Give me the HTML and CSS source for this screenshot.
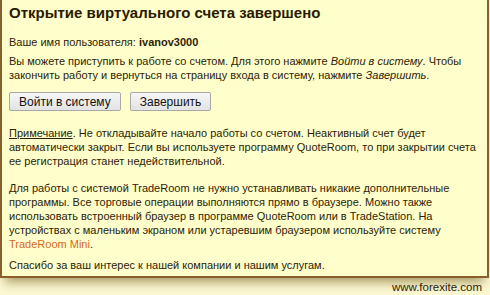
FILE: index.html
```html
<!DOCTYPE html>
<html lang="ru">
<head>
<meta charset="utf-8">
<link rel="stylesheet" href="styles.css">
</head>
<body>
<div class="page">
  <div class="panel">
    <h1 class="title">Открытие виртуального счета завершено</h1>
    <p class="user">Ваше имя пользователя: <b>ivanov3000</b></p>
    <p class="para">Вы можете приступить к работе со счетом. Для этого нажмите <i>Войти в систему</i>. Чтобы закончить работу и вернуться на страницу входа в систему, нажмите <i>Завершить</i>.</p>
    <div class="buttons">
      <button class="btn btn-login">Войти в систему</button>
      <button class="btn btn-finish">Завершить</button>
    </div>
    <p class="para note"><span class="u">Примечание</span>. Не откладывайте начало работы со счетом. Неактивный счет будет автоматически закрыт. Если вы используете программу QuoteRoom, то при закрытии счета ее регистрация станет недействительной.</p>
    <p class="para trade">Для работы с системой TradeRoom не нужно устанавливать никакие дополнительные программы. Все торговые операции выполняются прямо в браузере. Можно также использовать встроенный браузер в программе QuoteRoom или в TradeStation. На устройствах с маленьким экраном или устаревшим браузером используйте систему <a class="link" href="#">TradeRoom Mini</a>.</p>
    <p class="para thanks">Спасибо за ваш интерес к нашей компании и нашим услугам.</p>
  </div>
  <div class="footer">www.forexite.com</div>
</div>
</body>
</html>
```
FILE: styles.css
```css
html, body {
  margin: 0;
  padding: 0;
}
body {
  width: 490px;
  height: 295px;
  overflow: hidden;
  background: #fcf8d2;
  font-family: "Liberation Sans", Arial, sans-serif;
  color: #2e2206;
}
.page {
  display: flex;
  flex-direction: column;
  width: 490px;
}
.panel {
  width: 489px;
  box-sizing: border-box;
  height: 278px;
  background: #ffffcc;
  border: 2px solid #8a5f2d;
  border-top: none;
  padding: 4px 8px 0 7px;
  box-shadow: 0 9px 10px -5px rgba(110, 90, 20, 0.6);
}
.title {
  margin: 0;
  font-size: 15px;
  line-height: 18px;
  font-weight: bold;
  color: #2a1a00;
}
.user {
  margin: 13px 0 0;
  font-size: 11px;
  line-height: 14px;
}
.para {
  margin: 5px 0 0;
  font-size: 11px;
  line-height: 14px;
}
.buttons {
  display: flex;
  gap: 9px;
  margin-top: 10px;
}
.btn {
  font-family: "Liberation Sans", Arial, sans-serif;
  font-size: 12px;
  color: #111;
  height: 19px;
  padding: 0 9px;
  border: 1px solid #a9a9a9;
  border-radius: 2px;
  background: linear-gradient(#f6f6f6, #e3e3e3);
}
.note {
  margin-top: 15px;
}
.u {
  text-decoration: underline;
}
.trade {
  margin-top: 13px;
}
.link {
  color: #d2691e;
  text-decoration: none;
}
.thanks {
  margin-top: 7px;
}
.footer {
  text-align: right;
  padding-right: 8px;
  margin-top: 2px;
  font-size: 11.5px;
  line-height: 14px;
  color: #2e2206;
}
```
